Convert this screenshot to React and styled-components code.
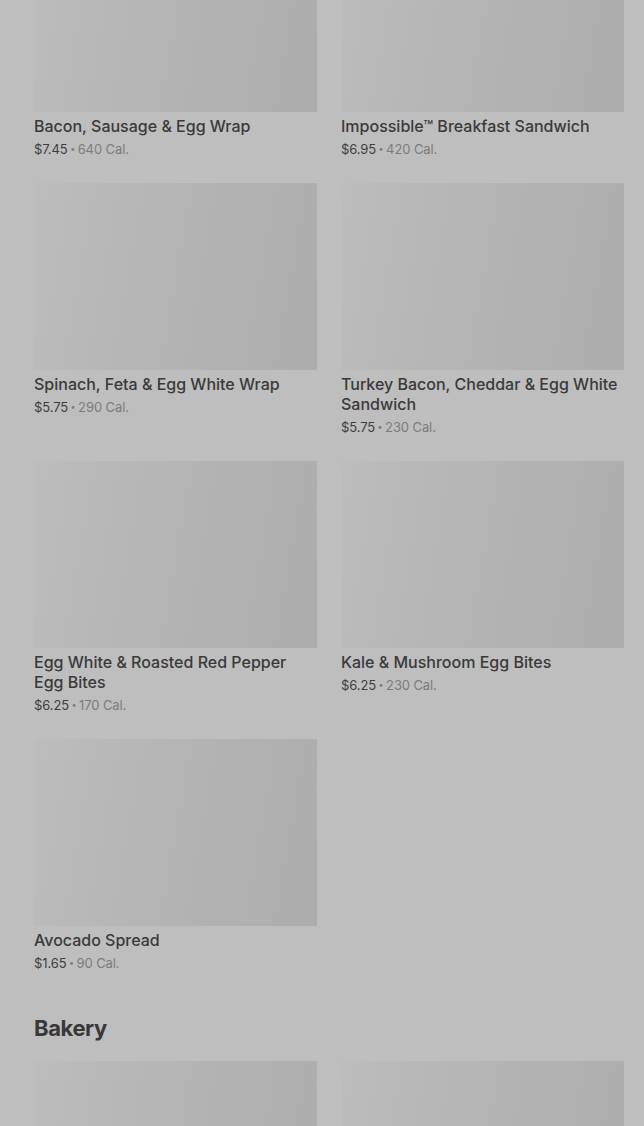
import React from "react";
import styled, { createGlobalStyle } from "styled-components";

const Global = createGlobalStyle`
  html, body { margin: 0; padding: 0; background: #bebebe; }
  body { font-family: Inter, Roboto, "Liberation Sans", Arial, sans-serif; overflow: hidden; }
`;

const Page = styled.div`
  width: 644px;
  height: 1126px;
  overflow: hidden;
  background: #bebebe;
`;

const Scroller = styled.div`
  margin-top: -75px;
  padding: 0 20px 0 34px;
`;

const Grid = styled.div`
  display: grid;
  grid-template-columns: 283px 283px;
  column-gap: 24px;
  row-gap: 24px;
`;

const Card = styled.div`
  display: flex;
  flex-direction: column;
`;

const Thumb = styled.div`
  height: 187px;
  background: linear-gradient(100deg, #bcbcbc 0%, #b3b3b3 55%, #adadad 100%);
`;

const Title = styled.div`
  margin-top: 4px;
  font-size: 16px;
  line-height: 20px;
  font-weight: 500;
  color: #3a3a3a;
`;

const Meta = styled.div`
  margin-top: 3px;
  font-size: 13px;
  line-height: 20px;
  color: #7c7c7c;
  letter-spacing: -0.1px;
`;

const Price = styled.span`
  color: #3e3e3e;
`;

const Dot = styled.span`
  display: inline-block;
  width: 10px;
  text-align: center;
  font-size: 9px;
  vertical-align: top;
  line-height: 20px;
`;

const SectionTitle = styled.h2`
  margin: 39px 0 17px;
  font-size: 22px;
  line-height: 32px;
  font-weight: 700;
  color: #383838;
  letter-spacing: -0.4px;
`;

const breakfast = [
  ["Bacon, Sausage & Egg Wrap", "$7.45", "640 Cal."],
  ["Impossible™ Breakfast Sandwich", "$6.95", "420 Cal."],
  ["Spinach, Feta & Egg White Wrap", "$5.75", "290 Cal."],
  ["Turkey Bacon, Cheddar & Egg White Sandwich", "$5.75", "230 Cal."],
  ["Egg White & Roasted Red Pepper Egg Bites", "$6.25", "170 Cal."],
  ["Kale & Mushroom Egg Bites", "$6.25", "230 Cal."],
  ["Avocado Spread", "$1.65", "90 Cal."],
];

function Item({ name, price, cal }) {
  return (
    <Card>
      <Thumb />
      <Title>{name}</Title>
      <Meta>
        <Price>{price}</Price>
        <Dot>•</Dot>
        {cal}
      </Meta>
    </Card>
  );
}

export default function App() {
  return (
    <Page>
      <Global />
      <Scroller>
        <Grid>
          {breakfast.map(([n, p, c]) => (
            <Item key={n} name={n} price={p} cal={c} />
          ))}
        </Grid>
        <SectionTitle>Bakery</SectionTitle>
        <Grid>
          <Card><Thumb /></Card>
          <Card><Thumb /></Card>
        </Grid>
      </Scroller>
    </Page>
  );
}
